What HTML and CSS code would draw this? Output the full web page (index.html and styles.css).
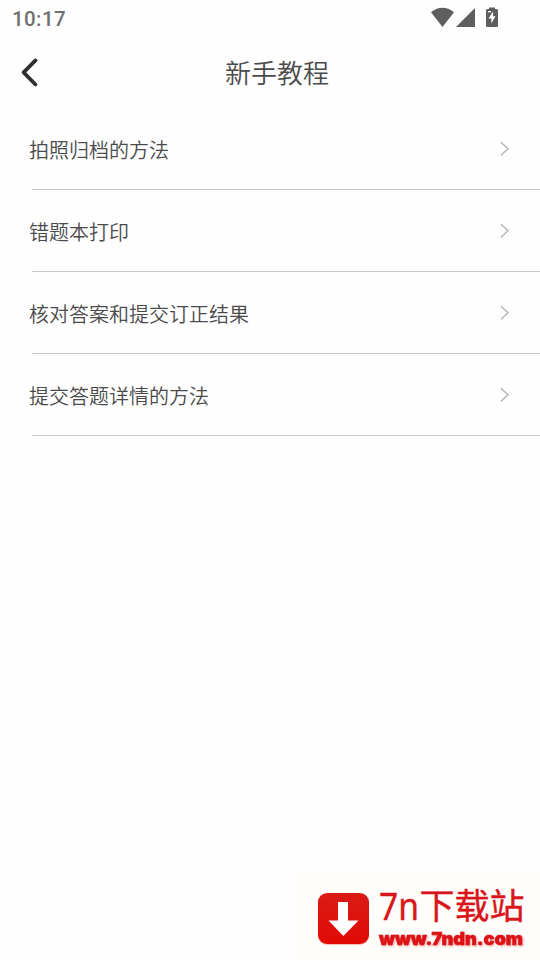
FILE: index.html
```html
<!DOCTYPE html>
<html lang="zh-CN">
<head>
<meta charset="utf-8">
<title>新手教程</title>
<link rel="stylesheet" href="styles.css">
</head>
<body>
<div class="screen">
  <div class="status">
    <span class="time">10:17</span>
    <svg class="status-icons" width="70" height="22" viewBox="430 6 70 22">
      <path d="M431 12.2Q442.500 3.500 454 12.200L442.500 27Z"/>
      <path d="M475 8V27H456Z"/>
      <path d="M489 7.500H495V9H496.500Q498 9 498 10.500V25.500Q498 27 496.500 27H487.500Q486 27 486 25.500V10.500Q486 9 487.500 9H489Z"/>
      <path class="bolt" d="M493 11.500L488.500 18.500H491.300V23.500L495.500 16.300H493Z"/>
      <path class="bolt" d="M488 11H491V12.300H488Z"/>
    </svg>
  </div>
  <header class="header">
    <svg class="back" width="20" height="32" viewBox="20 56 20 32"><path d="M35.500 60.400L23.600 72.400L35.500 84.500"/></svg>
    <h1>新手教程</h1>
  </header>
  <ul class="list">
    <li><span>拍照归档的方法</span><svg class="chevron" width="10" height="16" viewBox="0 0 10 16"><path d="M1 1.200L8 7.700L1 14.200"/></svg></li>
    <li><span>错题本打印</span><svg class="chevron" width="10" height="16" viewBox="0 0 10 16"><path d="M1 1.200L8 7.700L1 14.200"/></svg></li>
    <li><span>核对答案和提交订正结果</span><svg class="chevron" width="10" height="16" viewBox="0 0 10 16"><path d="M1 1.200L8 7.700L1 14.200"/></svg></li>
    <li><span>提交答题详情的方法</span><svg class="chevron" width="10" height="16" viewBox="0 0 10 16"><path d="M1 1.200L8 7.700L1 14.200"/></svg></li>
  </ul>
  <footer class="brand">
    <svg width="244" height="91" viewBox="296 869 244 91">
      <defs><linearGradient id="red" x2="0" y2="1"><stop stop-color="#d91b16"/><stop offset="1" stop-color="#e20a05"/></linearGradient></defs>
      <rect class="logo-shadow" x="318" y="894" width="51" height="51" rx="9"/>
      <rect x="318" y="893" width="51" height="51" rx="9" fill="url(#red)"/>
      <path class="arrow" d="M338 902H348V920.500H358.500L343.300 936L328.500 920.500H338Z"/>
      <text class="brand-name latin" x="379" y="919.500" textLength="40" lengthAdjust="spacingAndGlyphs">7n</text>
      <text class="brand-name" x="419.500" y="919">下载站</text>
      <text class="url" x="379" y="944.500" textLength="144" lengthAdjust="spacingAndGlyphs">www.7ndn.com</text>
    </svg>
  </footer>
</div>
</body>
</html>
```
FILE: styles.css
```css
* { box-sizing: border-box; }
body {
  margin: 0;
  background: #fefefe;
  color: #4a4a4a;
  font-family: "Noto Sans CJK SC", sans-serif;
}
.screen {
  width: 540px;
  height: 960px;
  display: flex;
  flex-direction: column;
  overflow: hidden;
}
.status {
  height: 36px;
  padding: 6px 40px 0 12px;
  display: flex;
  justify-content: space-between;
  align-items: flex-start;
}
.time {
  font: 500 20.500px/26px Roboto, sans-serif;
  letter-spacing: 0.4px;
  color: #707070;
}
.status-icons { fill: #5e5e5e; }
.bolt { fill: #fff; }
.header {
  height: 72px;
  padding: 0 20px;
  display: grid;
  grid-template-columns: 20px 1fr 20px;
  align-items: center;
}
.back path {
  fill: none;
  stroke: #303030;
  stroke-width: 3.8;
  stroke-linecap: round;
  stroke-linejoin: round;
}
h1 {
  margin: 0;
  padding-left: 14px;
  text-align: center;
  font-size: 26px;
  line-height: 38px;
  font-weight: 350;
}
.list {
  list-style: none;
  margin: 0;
  padding: 0 0 0 32px;
}
.list li {
  height: 82px;
  padding-right: 30px;
  display: flex;
  align-items: center;
  justify-content: space-between;
  border-bottom: 1px solid #c8c8c8;
}
.list span {
  margin-left: -3px;
  padding-top: 2px;
  font-size: 20px;
  line-height: 30px;
  font-weight: 350;
}
.chevron path {
  fill: none;
  stroke: #b4b4b4;
  stroke-width: 1.4;
}
.brand {
  margin-top: auto;
  margin-left: 296px;
  height: 91px;
  background: #fffefb;
}
.brand svg { display: block; }
.logo-shadow { fill: #f8bfb5; }
.arrow { fill: #fff; }
.brand-name {
  font-family: "Noto Sans CJK SC", sans-serif;
  font-size: 35px;
  font-weight: 400;
  fill: #d9161b;
  stroke: #d9161b;
  stroke-width: 0.4;
}
.latin {
  font-family: "Noto Sans", sans-serif;
  font-size: 38px;
}
.url {
  font-family: Inter, sans-serif;
  font-size: 18px;
  font-weight: 900;
  fill: #dc1216;
  stroke: #dc1216;
  stroke-width: 0.6;
  filter: drop-shadow(1px 1px 1px #efa09a);
}
```
